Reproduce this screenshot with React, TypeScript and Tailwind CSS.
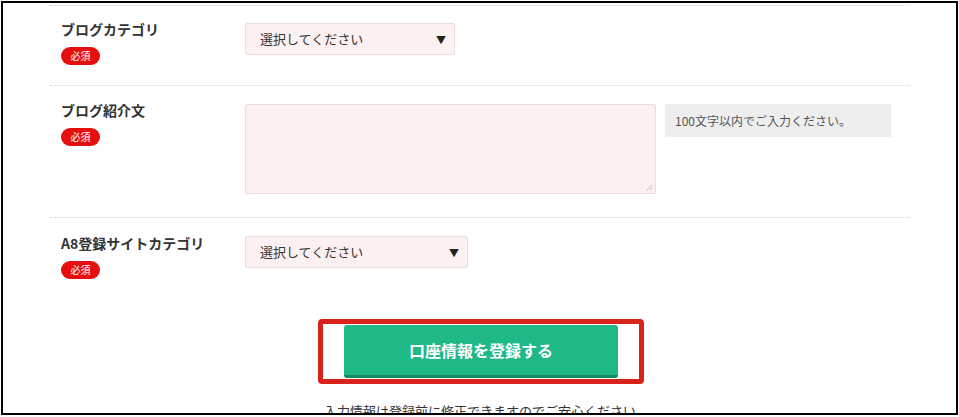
const jp = { fontFamily: '"Noto Sans CJK JP", "Noto Sans", sans-serif' };

function Badge() {
  return (
    <span className="inline-flex items-center justify-center w-[39px] h-[18px] rounded-full bg-[#e50f0f] text-white text-[10px] leading-none">
      必須
    </span>
  );
}

function Select({ width }: { width: string }) {
  return (
    <div
      className={`${width} h-[32px] flex items-center justify-between pl-[14px] pr-[8px] bg-[#fcf0f0] border border-[#eddcdc] rounded-[2px] text-[13px] text-[#333]`}
    >
      <span>選択してください</span>
      <span className="text-[10px] text-[#222]">▼</span>
    </div>
  );
}

function Label({ text }: { text: string }) {
  return (
    <div className="w-[184px] shrink-0">
      <p className="text-[14px] leading-[20px] font-bold text-[#333]">{text}</p>
      <div className="mt-[8px] flex">
        <Badge />
      </div>
    </div>
  );
}

export default function App() {
  return (
    <div className="w-[959px] h-[417px] bg-white pt-[1px] pl-[1px]" style={jp}>
      <div className="w-[957px] h-[414px] border-2 border-black overflow-hidden">
        <div className="ml-[47px] w-[860px] pt-[2px]">
          {/* category */}
          <div className="flex border-t border-b border-dotted border-[#d4d4d4] pl-[11px] pt-[13px] h-[81px]">
            <Label text="ブログカテゴリ" />
            <div className="mt-[4px]">
              <Select width="w-[210px]" />
            </div>
          </div>

          {/* description */}
          <div className="flex border-b border-dotted border-[#d4d4d4] pl-[11px] pt-[14px] h-[132px]">
            <Label text="ブログ紹介文" />
            <div className="mt-[4px] flex gap-[9px] items-start">
              <div className="relative w-[411px] h-[90px] bg-[#fcf0f0] border border-[#eddcdc] rounded-[2px]">
                <svg className="absolute right-[2px] bottom-[2px]" width="7" height="7" viewBox="0 0 7 7">
                  <path d="M6 1 L1 6 M6 4 L4 6" stroke="#999" strokeWidth="1" strokeDasharray="1 1" />
                </svg>
              </div>
              <div className="w-[226px] h-[33px] bg-[#eeeeee] flex items-center pl-[10px] text-[12px] text-[#555]">
                100文字以内でご入力ください。
              </div>
            </div>
          </div>

          {/* a8 category */}
          <div className="flex pl-[11px] pt-[15px]">
            <Label text="A8登録サイトカテゴリ" />
            <div className="mt-[3px]">
              <Select width="w-[223px]" />
            </div>
          </div>
        </div>

        {/* submit */}
        <div className="mt-[40px] flex justify-center pl-[3px]">
          <div className="border-[5px] border-[#d8231a] rounded-[4px] px-[21px] py-[1px]">
            <button className="w-[274px] h-[53px] rounded-[3px] bg-[#1fb987] border-b-[3px] border-[#17875f] text-white text-[16px] font-bold">
              口座情報を登録する
            </button>
          </div>
        </div>

        <p className="mt-[19px] text-center text-[13px] leading-[16px] text-[#333] pl-[1px]">
          入力情報は登録前に修正できますのでご安心ください
        </p>
      </div>
    </div>
  );
}
